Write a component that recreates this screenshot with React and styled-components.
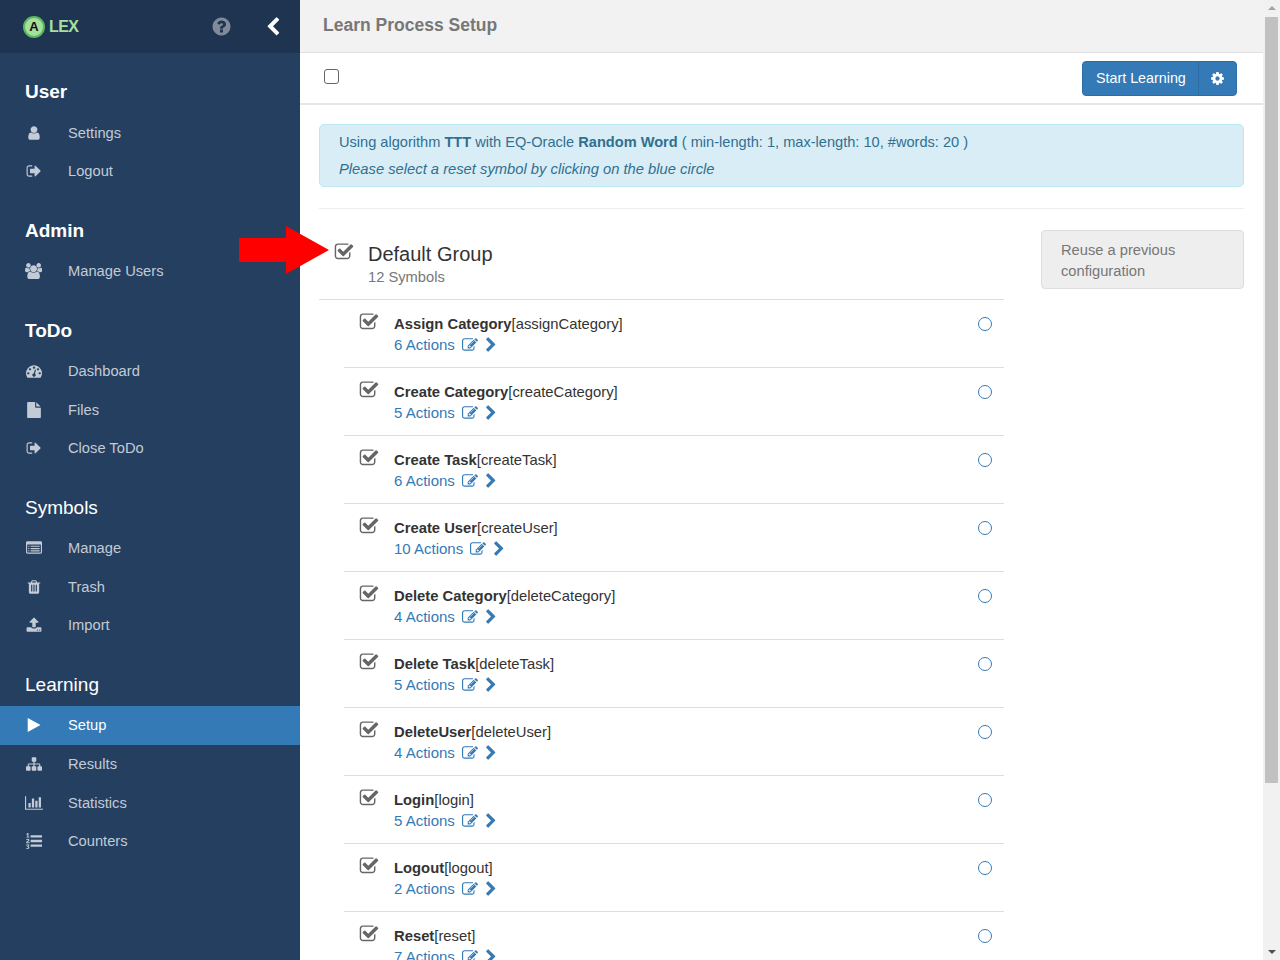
import React from "react";
import styled, { createGlobalStyle } from "styled-components";

// font-awesome 4 glyphs, all on a 1792 high grid
const glyphs = {
  user: [1792, "M1536 1399q0 109-62.5 187t-150.5 78h-854q-88 0-150.5-78t-62.5-187q0-85 8.5-160.5t31.5-152 58.5-131 94-89 134.5-34.5q131 128 313 128t313-128q76 0 134.5 34.5t94 89 58.5 131 31.5 152 8.5 160.5zm-256-887q0 159-112.5 271.5t-271.5 112.5-271.5-112.5-112.5-271.5 112.5-271.5 271.5-112.5 271.5 112.5 112.5 271.5z"],
  signOut: [1792, "M704 1440q0 4 1 20t.5 26.5-3 23.5-10 19.5-20.5 6.5h-320q-119 0-203.5-84.5t-84.5-203.5v-704q0-119 84.5-203.5t203.5-84.5h320q13 0 22.5 9.5t9.5 22.5q0 4 1 20t.5 26.5-3 23.5-10 19.5-20.5 6.5h-320q-66 0-113 47t-47 113v704q0 66 47 113t113 47h312l11.5 1 11.5 3 8 5.5 7 9 2 13.5zm928-544q0 26-19 45l-544 544q-19 19-45 19t-45-19-19-45v-288h-448q-26 0-45-19t-19-45v-384q0-26 19-45t45-19h448v-288q0-26 19-45t45-19 45 19l544 544q19 19 19 45z"],
  users: [1920, "M593 896q-162 5-265 128h-134q-82 0-138-40.5t-56-118.5q0-353 124-353 6 0 43.5 21t97.5 42.5 119 21.5q67 0 133-23-5 37-5 66 0 139 81 256zm1071 637q0 120-73 189.5t-194 69.5h-874q-121 0-194-69.5t-73-189.5q0-53 3.5-103.5t14-109 26.5-108.5 43-97.5 62-81 85.5-53.5 111.5-20q10 0 43 21.5t73 48 107 48 135 21.5 135-21.5 107-48 73-48 43-21.5q61 0 111.5 20t85.5 53.5 62 81 43 97.5 26.5 108.5 14 109 3.5 103.5zm-1024-1277q0 106-75 181t-181 75-181-75-75-181 75-181 181-75 181 75 75 181zm704 384q0 159-112.5 271.5t-271.5 112.5-271.5-112.5-112.5-271.5 112.5-271.5 271.5-112.5 271.5 112.5 112.5 271.5zm576 225q0 78-56 118.5t-138 40.5h-134q-103-123-265-128 81-117 81-256 0-29-5-66 66 23 133 23 59 0 119-21.5t97.5-42.5 43.5-21q124 0 124 353zm-128-609q0 106-75 181t-181 75-181-75-75-181 75-181 181-75 181 75 75 181z"],
  dashboard: [1792, "M384 1152q0-53-37.5-90.5t-90.5-37.5-90.5 37.5-37.5 90.5 37.5 90.5 90.5 37.5 90.5-37.5 37.5-90.5zm192-448q0-53-37.5-90.5t-90.5-37.5-90.5 37.5-37.5 90.5 37.5 90.5 90.5 37.5 90.5-37.5 37.5-90.5zm428 481l101-382q6-26-7.5-48.5t-38.5-29.5-48 6.5-30 39.5l-101 382q-60 5-107 43.5t-63 98.5q-20 77 20 146t117 89 146-20 89-117q16-60-6-117t-72-91zm660-33q0-53-37.5-90.5t-90.5-37.5-90.5 37.5-37.5 90.5 37.5 90.5 90.5 37.5 90.5-37.5 37.5-90.5zm-640-640q0-53-37.5-90.5t-90.5-37.5-90.5 37.5-37.5 90.5 37.5 90.5 90.5 37.5 90.5-37.5 37.5-90.5zm448 192q0-53-37.5-90.5t-90.5-37.5-90.5 37.5-37.5 90.5 37.5 90.5 90.5 37.5 90.5-37.5 37.5-90.5zm320 448q0 261-141 483-19 29-54 29h-1402q-35 0-54-29-141-221-141-483 0-182 71-348t191-286 286-191 348-71 348 71 286 191 191 286 71 348z"],
  file: [1792, "M1152 512v-472q22 14 36 28l408 408q14 14 28 36h-472zm-128 32q0 40 28 68t68 28h544v1056q0 40-28 68t-68 28h-1344q-40 0-68-28t-28-68v-1600q0-40 28-68t68-28h800v544z"],
  listAlt: [1792, "M384 1184v64q0 13-9.5 22.5t-22.5 9.5h-64q-13 0-22.5-9.5t-9.5-22.5v-64q0-13 9.5-22.5t22.5-9.5h64q13 0 22.5 9.5t9.5 22.5zm0-256v64q0 13-9.5 22.5t-22.5 9.5h-64q-13 0-22.5-9.5t-9.5-22.5v-64q0-13 9.5-22.5t22.5-9.5h64q13 0 22.5 9.5t9.5 22.5zm0-256v64q0 13-9.5 22.5t-22.5 9.5h-64q-13 0-22.5-9.5t-9.5-22.5v-64q0-13 9.5-22.5t22.5-9.5h64q13 0 22.5 9.5t9.5 22.5zm1152 512v64q0 13-9.5 22.5t-22.5 9.5h-960q-13 0-22.5-9.5t-9.5-22.5v-64q0-13 9.5-22.5t22.5-9.5h960q13 0 22.5 9.5t9.5 22.5zm0-256v64q0 13-9.5 22.5t-22.5 9.5h-960q-13 0-22.5-9.5t-9.5-22.5v-64q0-13 9.5-22.5t22.5-9.5h960q13 0 22.5 9.5t9.5 22.5zm0-256v64q0 13-9.5 22.5t-22.5 9.5h-960q-13 0-22.5-9.5t-9.5-22.5v-64q0-13 9.5-22.5t22.5-9.5h960q13 0 22.5 9.5t9.5 22.5zm128 704v-832q0-13-9.5-22.5t-22.5-9.5h-1472q-13 0-22.5 9.5t-9.5 22.5v832q0 13 9.5 22.5t22.5 9.5h1472q13 0 22.5-9.5t9.5-22.5zm128-1088v1088q0 66-47 113t-113 47h-1472q-66 0-113-47t-47-113v-1088q0-66 47-113t113-47h1472q66 0 113 47t47 113z"],
  trash: [1792, "M704 1376v-704q0-14-9-23t-23-9h-64q-14 0-23 9t-9 23v704q0 14 9 23t23 9h64q14 0 23-9t9-23zm256 0v-704q0-14-9-23t-23-9h-64q-14 0-23 9t-9 23v704q0 14 9 23t23 9h64q14 0 23-9t9-23zm256 0v-704q0-14-9-23t-23-9h-64q-14 0-23 9t-9 23v704q0 14 9 23t23 9h64q14 0 23-9t9-23zm-544-992h448l-48-117q-7-9-17-11h-317q-10 2-17 11zm928 32v64q0 14-9 23t-23 9h-96v948q0 83-47 143.5t-113 60.5h-832q-66 0-113-58.5t-47-141.5v-952h-96q-14 0-23-9t-9-23v-64q0-14 9-23t23-9h309l70-167q15-37 54-63t79-26h320q40 0 79 26t54 63l70 167h309q14 0 23 9t9 23z"],
  upload: [1792, "M1344 1472q0-26-19-45t-45-19-45 19-19 45 19 45 45 19 45-19 19-45zm256 0q0-26-19-45t-45-19-45 19-19 45 19 45 45 19 45-19 19-45zm128-224v320q0 40-28 68t-68 28h-1472q-40 0-68-28t-28-68v-320q0-40 28-68t68-28h427q21 56 70.5 92t110.5 36h256q61 0 110.5-36t70.5-92h427q40 0 68 28t28 68zm-325-648q-17 40-59 40h-256v448q0 26-19 45t-45 19h-256q-26 0-45-19t-19-45v-448h-256q-42 0-59-40-17-39 14-69l448-448q18-19 45-19t45 19l448 448q31 30 14 69z"],
  play: [1792, "M1576 927l-1328 738q-23 13-39.5 3t-16.5-36v-1472q0-26 16.5-36t39.5 3l1328 738q23 13 23 31t-23 31z"],
  sitemap: [1792, "M1792 1248v320q0 40-28 68t-68 28h-320q-40 0-68-28t-28-68v-320q0-40 28-68t68-28h96v-192h-512v192h96q40 0 68 28t28 68v320q0 40-28 68t-68 28h-320q-40 0-68-28t-28-68v-320q0-40 28-68t68-28h96v-192h-512v192h96q40 0 68 28t28 68v320q0 40-28 68t-68 28h-320q-40 0-68-28t-28-68v-320q0-40 28-68t68-28h96v-192q0-52 38-90t90-38h512v-192h-96q-40 0-68-28t-28-68v-320q0-40 28-68t68-28h320q40 0 68 28t28 68v320q0 40-28 68t-68 28h-96v192h512q52 0 90 38t38 90v192h96q40 0 68 28t28 68z"],
  barChart: [2048, "M640 896v512h-256v-512h256zm384-512v1024h-256v-1024h256zm1024 1152v128h-2048v-1536h128v1408h1920zm-640-896v768h-256v-768h256zm384-384v1152h-256v-1152h256z"],
  listOl: [1792, "M381 1620q0 80-54.5 126t-135.5 46q-106 0-172-66l57-88q49 45 106 45 29 0 50.5-14.5t21.5-42.5q0-64-105-56l-26-56q8-10 32.5-43.5t42.5-54 37-38.5v-1q-16 0-48.5 1t-48.5 1v53h-106v-152h333v88l-95 115q51 12 81 49t30 88zm2-627v159h-362q-6-36-6-54 0-51 23.5-93t56.5-68 66-47.5 56.5-43.5 23.5-45q0-25-14.5-38.5t-39.5-13.5q-46 0-81 58l-85-59q24-51 71.5-79.5t105.5-28.5q73 0 123 41.5t50 112.5q0 50-34 91.5t-75 64.5-75.5 50.5-35.5 52.5h127v-60h105zm1409 319v192q0 13-9.5 22.5t-22.5 9.5h-1216q-13 0-22.5-9.5t-9.5-22.5v-192q0-14 9-23t23-9h1216q13 0 22.5 9.5t9.5 22.5zm-1408-899v99h-335v-99h107q0-41 .5-122t.5-121v-12h-2q-8 17-50 54l-71-76 136-127h106v404h108zm1408 387v192q0 13-9.5 22.5t-22.5 9.5h-1216q-13 0-22.5-9.5t-9.5-22.5v-192q0-14 9-23t23-9h1216q13 0 22.5 9.5t9.5 22.5zm0-512v192q0 13-9.5 22.5t-22.5 9.5h-1216q-13 0-22.5-9.5t-9.5-22.5v-192q0-13 9.5-22.5t22.5-9.5h1216q13 0 22.5 9.5t9.5 22.5z"],
  question: [1792, "M1024 1376v-192q0-14-9-23t-23-9h-192q-14 0-23 9t-9 23v192q0 14 9 23t23 9h192q14 0 23-9t9-23zm256-672q0-88-55.5-163t-138.5-116-170-41q-243 0-371 213-15 24 8 42l132 100q7 6 19 6 16 0 25-12 53-68 86-92 34-24 86-24 48 0 85.5 26t37.5 59q0 38-20 61t-68 45q-63 28-115.5 86.5t-52.5 125.5v36q0 14 9 23t23 9h192q14 0 23-9t9-23q0-19 21.5-49.5t54.5-49.5q32-18 49-28.5t46-35 44.5-48 28-60.5 12.5-81zm384 192q0 209-103 385.5t-279.5 279.5-385.5 103-385.5-103-279.5-279.5-103-385.5 103-385.5 279.5-279.5 385.5-103 385.5 103 279.5 279.5 103 385.5z"],
  chevronLeft: [1792, "M1427 301l-531 531 531 531q19 19 19 45t-19 45l-166 166q-19 19-45 19t-45-19l-742-742q-19-19-19-45t19-45l742-742q19-19 45-19t45 19l166 166q19 19 19 45t-19 45z"],
  chevronRight: [1792, "M1363 877l-742 742q-19 19-45 19t-45-19l-166-166q-19-19-19-45t19-45l531-531-531-531q-19-19-19-45t19-45l166-166q19-19 45-19t45 19l742 742q19 19 19 45t-19 45z"],
  cog: [1792, "M1152 896q0-106-75-181t-181-75-181 75-75 181 75 181 181 75 181-75 75-181zm512-109v222q0 12-8 23t-20 13l-185 28q-19 54-39 91 35 50 107 138 10 12 10 25t-9 23q-27 37-99 108t-94 71q-12 0-26-9l-138-108q-44 23-91 38-16 136-29 186-7 28-36 28h-222q-14 0-24.5-8.5t-11.5-21.5l-28-184q-49-16-90-37l-141 107q-10 9-25 9-14 0-25-11-126-114-165-168-7-10-7-23 0-12 8-23 15-21 51-66.5t54-70.5q-27-50-41-99l-183-27q-13-2-21-12.5t-8-23.5v-222q0-12 8-23t19-13l186-28q14-46 39-92-40-57-107-138-10-12-10-24 0-10 9-23 26-36 98.5-107.5t94.5-71.5q13 0 26 10l138 107q44-23 91-38 16-136 29-186 7-28 36-28h222q14 0 24.5 8.5t11.5 21.5l28 184q49 16 90 37l142-107q9-9 24-9 13 0 25 10 129 119 165 170 7 8 7 22 0 12-8 23-15 21-51 66.5t-54 70.5q26 50 41 98l183 28q13 2 21 12.5t8 23.5z"],
  checkSquare: [1792, "M1472 930v318q0 119-84.5 203.5t-203.5 84.5h-832q-119 0-203.5-84.5t-84.5-203.5v-832q0-119 84.5-203.5t203.5-84.5h832q63 0 117 25 15 7 18 23 3 17-9 29l-49 49q-10 10-23 10-3 0-9-2-23-6-45-6h-832q-66 0-113 47t-47 113v832q0 66 47 113t113 47h832q66 0 113-47t47-113v-254q0-13 9-22l64-64q10-10 23-10 6 0 12 3 20 8 20 29zm231-489l-814 814q-24 24-57 24t-57-24l-430-430q-24-24-24-57t24-57l110-110q24-24 57-24t57 24l263 263 647-647q24-24 57-24t57 24l110 110q24 24 24 57t-24 57z"],
  edit: [1792, "M888 1184l116-116-152-152-116 116v56h96v96h56zm440-720q-16-16-33 1l-350 350q-17 17-1 33t33-1l350-350q17-17 1-33zm80 594v190q0 119-84.5 203.5t-203.5 84.5h-832q-119 0-203.5-84.5t-84.5-203.5v-832q0-119 84.5-203.5t203.5-84.5h832q63 0 117 25 15 7 18 23 3 17-9 29l-49 49q-14 14-32 8-23-6-45-6h-832q-66 0-113 47t-47 113v832q0 66 47 113t113 47h832q66 0 113-47t47-113v-126q0-13 9-22l64-64q15-15 35-7t20 29zm-96-738l288 288-672 672h-288v-288zm444 132l-92 92-288-288 92-92q28-28 68-28t68 28l152 152q28 28 28 68t-28 68z"],
};

const Icon = ({ name, size = 16, color = "currentColor" }) => {
  const [w, d] = glyphs[name];
  return (
    <svg width={(w * size) / 1792} height={size} viewBox={`0 0 ${w} 1792`} fill={color} style={{ display: "block", flex: "none" }}>
      <path d={d} />
    </svg>
  );
};

const GlobalStyle = createGlobalStyle`
  html, body {
    margin: 0;
    height: 100%;
    overflow: hidden;
    background: white;
  }
  * {
    box-sizing: border-box;
  }
  body {
    font-family: "Liberation Sans", Arial, sans-serif;
    font-size: 15px;
    color: #333;
  }
`;

const Page = styled.div`
  display: flex;
  height: 960px;
  width: 1280px;
  overflow: hidden;
`;

const Sidebar = styled.nav`
  width: 300px;
  flex: none;
  background-color: #253f60;
  color: #c2cbd6;
`;

const Brand = styled.div`
  height: 53px;
  margin-bottom: -1.2px;
  background-color: #1f3451;
  display: flex;
  align-items: center;
  padding: 0 17px 0 23px;
`;

const Badge = styled.span`
  width: 22px;
  height: 22px;
  border-radius: 50%;
  border: 2px solid #5cb85c;
  background: #a5e09f;
  color: #111;
  font-size: 13px;
  font-weight: bold;
  display: flex;
  align-items: center;
  justify-content: center;
`;

const BrandName = styled.span`
  margin-left: 4px;
  color: #a5e09f;
  font-size: 16px;
  font-weight: bold;
  letter-spacing: -0.6px;
  flex: 1;
`;

const HelpButton = styled.span`
  margin-right: 31px;
  opacity: 0.9;
`;

const SectionTitle = styled.h3`
  margin: 0;
  height: 61.4px;
  padding: 25.2px 0 0 25px;
  font-size: 19px;
  line-height: 30px;
  color: white;
  font-weight: ${p => (p.$strong ? "bold" : "normal")};
`;

const MenuItem = styled.a`
  display: flex;
  align-items: center;
  height: 38.6px;
  padding-left: 25px;
  font-size: 14.7px;
  background-color: ${p => (p.$active ? "#337ab7" : "transparent")};
  color: ${p => (p.$active ? "white" : "#c2cbd6")};
`;

const MenuIcon = styled.span`
  width: 18px;
  margin-right: 25px;
  display: flex;
  justify-content: center;
`;

const Main = styled.main`
  flex: 1;
  min-width: 0;
`;

const TitleBar = styled.header`
  height: 53px;
  background-color: #f2f2f2;
  border-bottom: 1px solid #e0e0e0;
  padding: 0 23px 2px;
  display: flex;
  align-items: center;
  font-size: 17.5px;
  font-weight: bold;
  color: #777;
`;

const ActionBar = styled.div`
  height: 52px;
  border-bottom: 2px solid #e7e7e7;
  padding: 8px 26px 8px 23.5px;
  display: flex;
  justify-content: space-between;
  align-items: flex-start;
`;

const SelectAll = styled.span`
  margin-top: 8px;
  width: 15px;
  height: 15px;
  border: 1.5px solid #666;
  border-radius: 3px;
`;

const SplitButton = styled.div`
  display: flex;
  height: 35px;
  background-color: #337ab7;
  border: 1px solid #2e6da4;
  border-radius: 4px;
  color: white;
`;

const StartButton = styled.span`
  width: 116px;
  padding-left: 13px;
  font-size: 14.3px;
  line-height: 33px;
  border-right: 1px solid #2e6da4;
`;

const GearButton = styled.span`
  width: 37px;
  display: flex;
  align-items: center;
  justify-content: center;
`;

const Content = styled.div`
  padding: 19px 19px 0;
`;

const Notice = styled.div`
  height: 63px;
  padding: 4px 19px;
  background-color: #d9edf7;
  border: 1px solid #bce8f1;
  border-radius: 5px;
  color: #31708f;
  line-height: 27px;
  font-size: 14.6px;
  i {
    font-size: 14.75px;
  }
`;

const Divider = styled.hr`
  margin: 21px 0;
  border: 0;
  border-top: 1px solid #eee;
`;

const Columns = styled.div`
  display: flex;
  justify-content: space-between;
  align-items: flex-start;
`;

const GroupColumn = styled.section`
  width: 685px;
`;

const GroupHeader = styled.div`
  height: 70px;
  display: flex;
  padding-left: 15px;
  border-bottom: 1px solid #ddd;
`;

const GroupCheck = styled.span`
  width: 34px;
  padding-top: 12px;
  color: #666;
`;

const GroupText = styled.div`
  padding-top: 9px;
`;

const GroupName = styled.div`
  font-size: 20px;
  line-height: 30px;
  color: #333;
`;

const GroupCount = styled.div`
  font-size: 14.7px;
  line-height: 17px;
  color: #777;
`;

const SymbolRow = styled.div`
  height: 68px;
  margin-left: 25px;
  padding: 13px 12px 0 15px;
  border-bottom: 1px solid #ddd;
  display: flex;
`;

const RowCheck = styled.span`
  width: 35px;
  margin-top: -1px;
  color: #666;
`;

const RowText = styled.div`
  flex: 1;
`;

const RowTitle = styled.div`
  padding-top: 1px;
  font-size: 14.8px;
  line-height: 20px;
  color: #333;
`;

const RowActions = styled.div`
  display: flex;
  align-items: center;
  line-height: 21px;
  color: #337ab7;
  > span {
    margin-right: 7px;
  }
  svg + svg {
    margin-left: 5px;
  }
`;

const ResetCircle = styled.span`
  margin-top: 4px;
  width: 14px;
  height: 14px;
  border: 1.5px solid #337ab7;
  border-radius: 50%;
`;

const ReuseButton = styled.div`
  width: 203px;
  height: 59px;
  padding: 9px 19px;
  background-color: #eee;
  border: 1px solid #ddd;
  border-radius: 4px;
  color: #777;
  font-size: 14.7px;
  line-height: 21px;
`;

const Pointer = styled.svg`
  position: absolute;
  left: 239px;
  top: 226px;
`;

const Scrollbar = styled.div`
  width: 17px;
  flex: none;
  background-color: #f1f1f1;
  display: flex;
  flex-direction: column;
  align-items: center;
  position: relative;
`;

const ScrollThumb = styled.div`
  margin-top: 17px;
  width: 13px;
  height: 766px;
  background-color: #c1c1c1;
`;

const ScrollArrow = styled.span`
  position: absolute;
  ${p => (p.$down ? "bottom: 6px;" : "top: 6px;")}
  border-left: 4px solid transparent;
  border-right: 4px solid transparent;
  ${p => (p.$down ? "border-top: 4px solid #505050;" : "border-bottom: 4px solid #a3a3a3;")}
`;

const menu = [
  { title: "User", strong: true, items: [["user", "Settings"], ["signOut", "Logout"]] },
  { title: "Admin", strong: true, items: [["users", "Manage Users"]] },
  { title: "ToDo", strong: true, items: [["dashboard", "Dashboard"], ["file", "Files"], ["signOut", "Close ToDo"]] },
  { title: "Symbols", items: [["listAlt", "Manage"], ["trash", "Trash"], ["upload", "Import"]] },
  { title: "Learning", items: [["play", "Setup", true], ["sitemap", "Results"], ["barChart", "Statistics"], ["listOl", "Counters"]] },
];

const symbols = [
  ["Assign Category", "assignCategory", 6],
  ["Create Category", "createCategory", 5],
  ["Create Task", "createTask", 6],
  ["Create User", "createUser", 10],
  ["Delete Category", "deleteCategory", 4],
  ["Delete Task", "deleteTask", 5],
  ["DeleteUser", "deleteUser", 4],
  ["Login", "login", 5],
  ["Logout", "logout", 2],
  ["Reset", "reset", 7],
];

const App = () => (
  <Page>
    <GlobalStyle />
    <Sidebar>
      <Brand>
        <Badge>A</Badge>
        <BrandName>LEX</BrandName>
        <HelpButton><Icon name="question" size={21} color="#8a94a3" /></HelpButton>
        <Icon name="chevronLeft" size={20} color="white" />
      </Brand>
      {menu.map(section => (
        <div key={section.title}>
          <SectionTitle $strong={section.strong}>{section.title}</SectionTitle>
          {section.items.map(([icon, label, active]) => (
            <MenuItem key={label} $active={active}>
              <MenuIcon><Icon name={icon} /></MenuIcon>
              {label}
            </MenuItem>
          ))}
        </div>
      ))}
    </Sidebar>
    <Main>
      <TitleBar>Learn Process Setup</TitleBar>
      <ActionBar>
        <SelectAll />
        <SplitButton>
          <StartButton>Start Learning</StartButton>
          <GearButton><Icon name="cog" size={15} /></GearButton>
        </SplitButton>
      </ActionBar>
      <Content>
        <Notice>
          Using algorithm <b>TTT</b> with EQ-Oracle <b>Random Word</b> ( min-length: 1, max-length: 10, #words: 20 )
          <br />
          <i>Please select a reset symbol by clicking on the blue circle</i>
        </Notice>
        <Divider />
        <Columns>
          <GroupColumn>
            <GroupHeader>
              <GroupCheck><Icon name="checkSquare" size={20} /></GroupCheck>
              <GroupText>
                <GroupName>Default Group</GroupName>
                <GroupCount>12 Symbols</GroupCount>
              </GroupText>
            </GroupHeader>
            {symbols.map(([name, id, count]) => (
              <SymbolRow key={id}>
                <RowCheck><Icon name="checkSquare" size={20} /></RowCheck>
                <RowText>
                  <RowTitle><b>{name}</b>[{id}]</RowTitle>
                  <RowActions>
                    <span>{count} Actions</span>
                    <Icon name="edit" size={16} />
                    <Icon name="chevronRight" size={16} />
                  </RowActions>
                </RowText>
                <ResetCircle />
              </SymbolRow>
            ))}
          </GroupColumn>
          <ReuseButton>Reuse a previous configuration</ReuseButton>
        </Columns>
      </Content>
    </Main>
    <Scrollbar>
      <ScrollArrow />
      <ScrollThumb />
      <ScrollArrow $down />
    </Scrollbar>
    <Pointer width="91" height="48" viewBox="0 0 91 48">
      <path d="M0 12h47V0l43 24-43 24V36H0z" fill="#f00" />
    </Pointer>
  </Page>
);

export default App;
